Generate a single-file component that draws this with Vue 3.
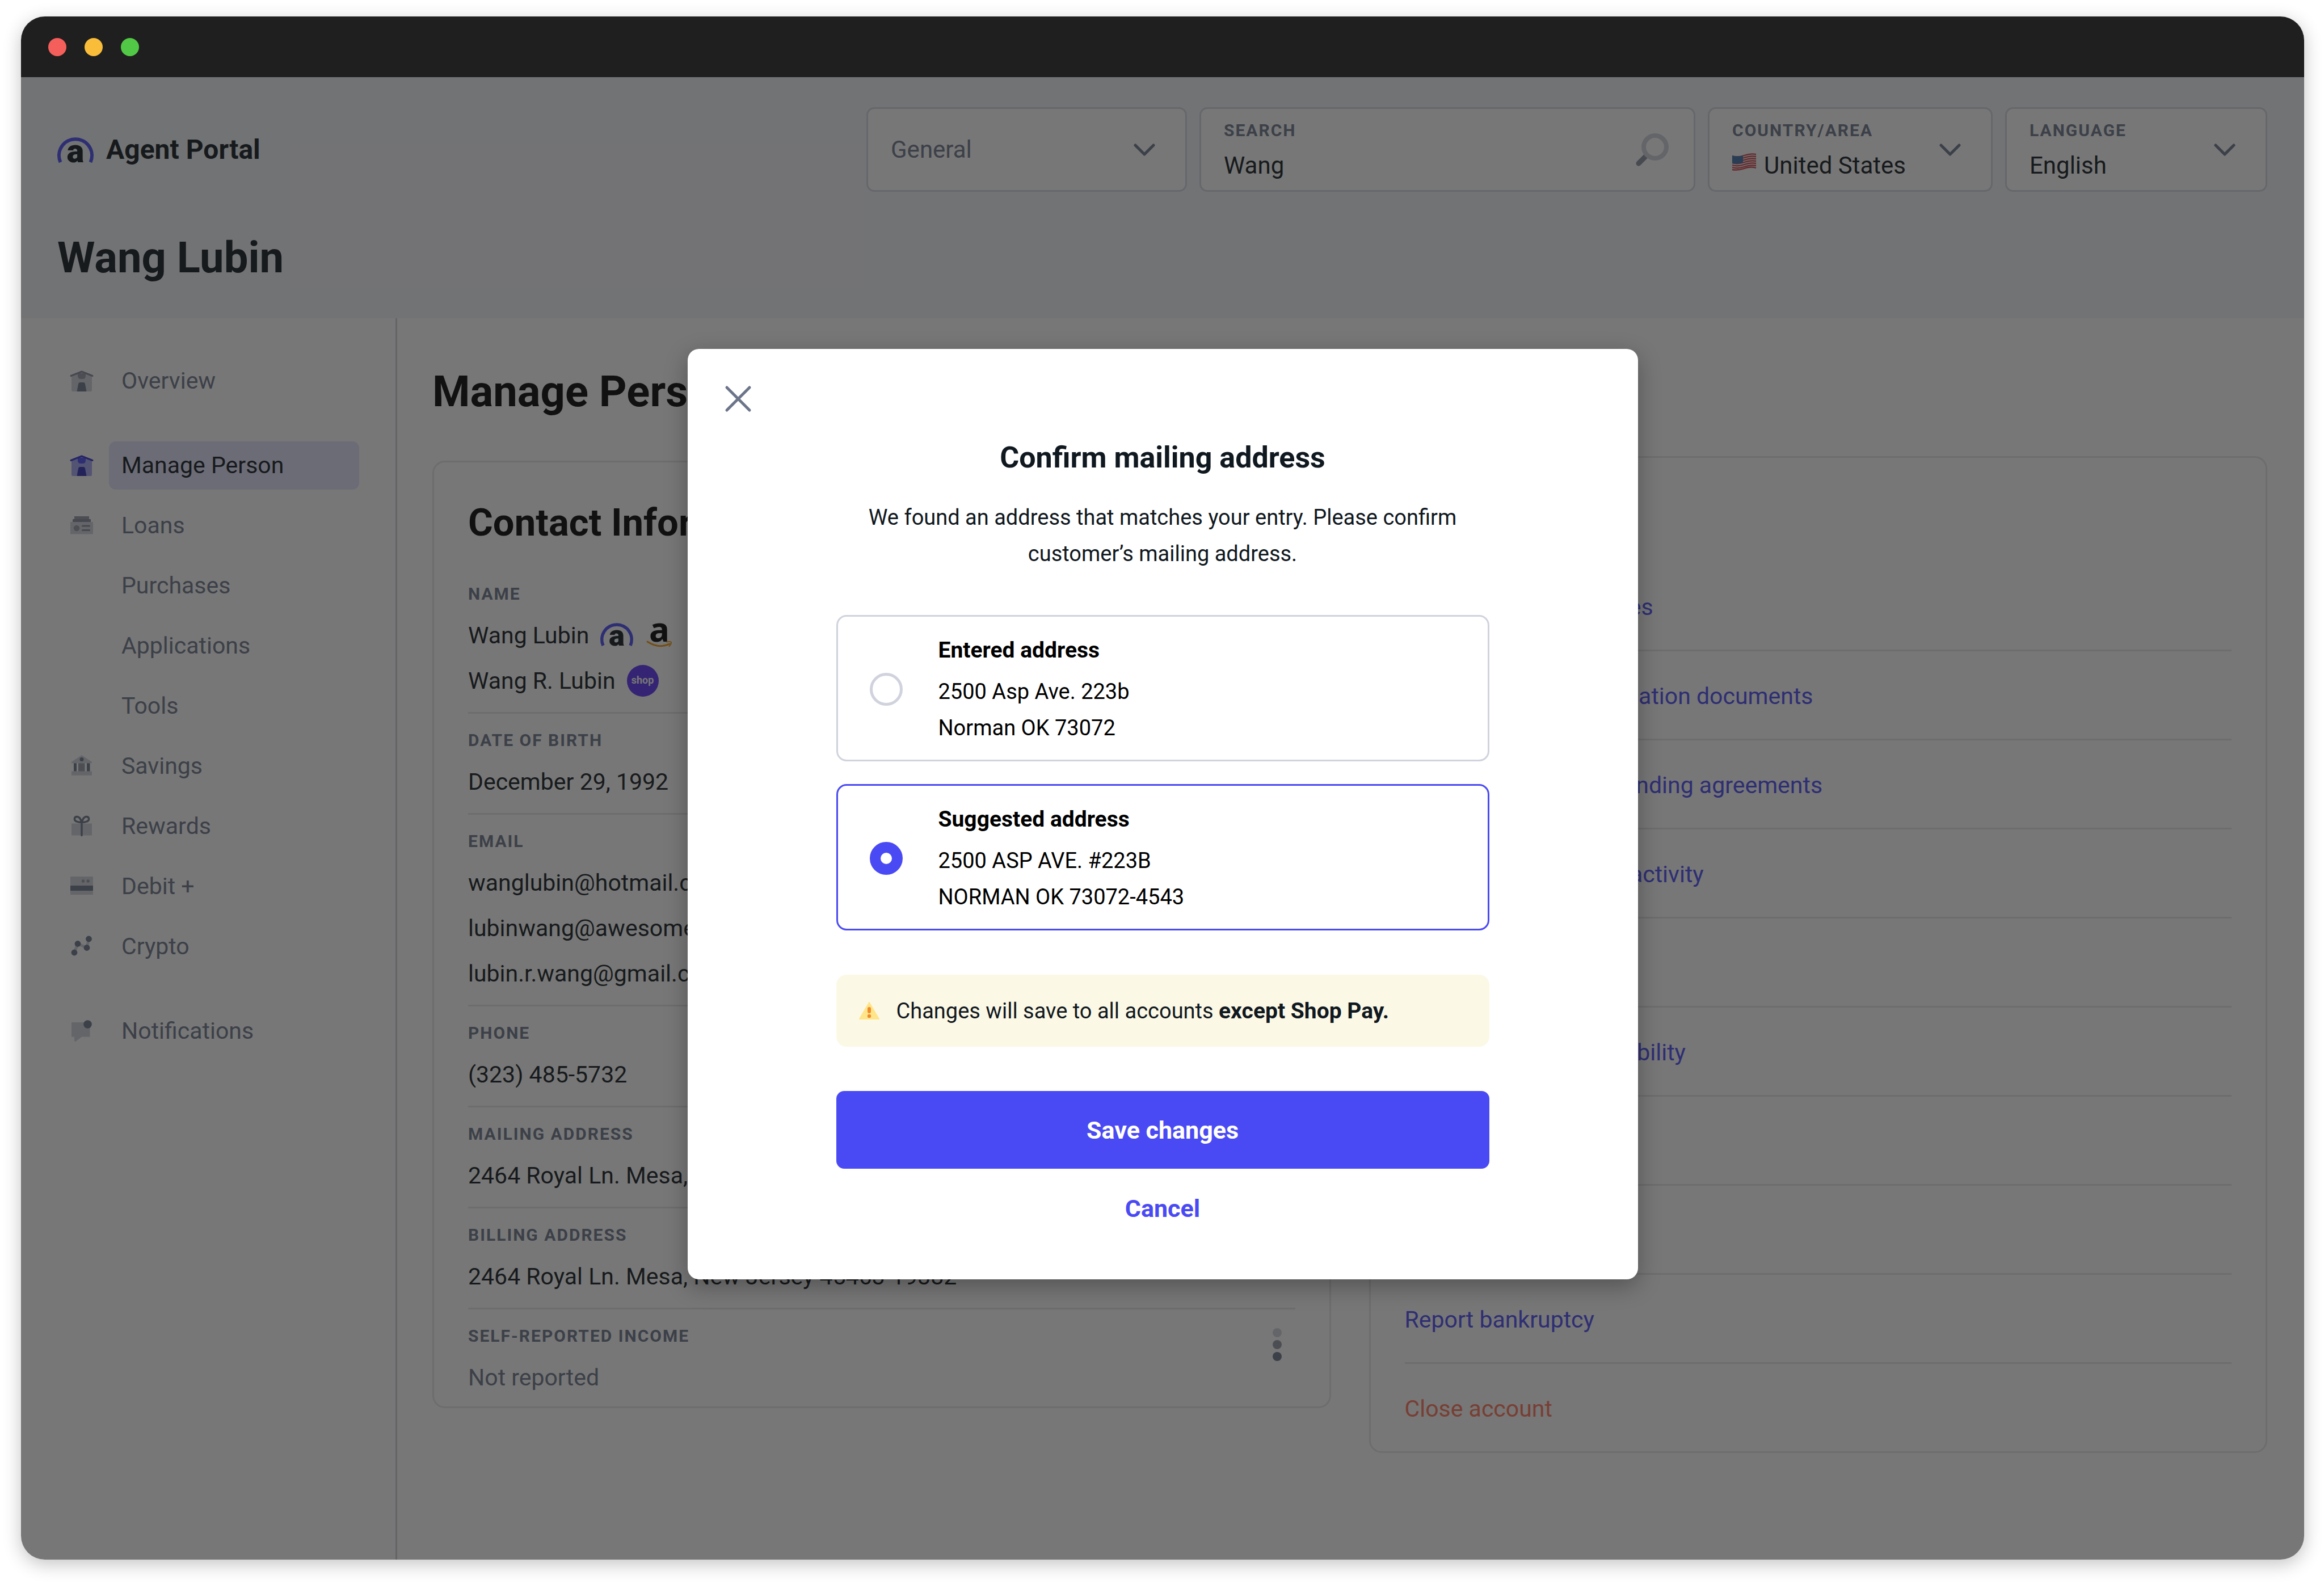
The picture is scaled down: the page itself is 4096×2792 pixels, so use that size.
<script setup>
import { ref } from 'vue'

const scope = ref('General')
const search = ref('Wang')
const country = ref('United States')
const language = ref('English')
const address = ref('suggested')

const dot = (x, y, r) => `M${x - r} ${y}a${r} ${r} 0 1 0 ${2 * r} 0a${r} ${r} 0 1 0 ${-2 * r} 0z`

const house = [
  { tone: 'light', d: 'M2 11L20 4L38 11V36Q38 38 36 38H4Q2 38 2 36z' },
  { tone: 'mid', d: 'M13 6H27V10Q27 16 22 16H18Q13 16 13 10z' },
  { tone: 'roof', line: 3, d: 'M1 10.5L20 3L39 10.5' },
  { tone: 'dark', d: 'M11.5 38L14 25Q14.500 22 17 22H23Q25.500 22 26 25L28.500 38z' },
]

const icons = {
  house,
  loans: [
    { tone: 'light', d: 'M0 13H40V34.500H0z' },
    { tone: 'mid', d: 'M7 3H33V8H7z' },
    { tone: 'roof', d: 'M5 8H35Q36 8 36 9V13H4V9Q4 8 5 8z' },
    { tone: 'mid', d: dot(11, 24, 5.3) },
    { tone: 'roof', line: 3.2, d: 'M21.500 20H33.500M21.500 27.500H33.500' },
  ],
  savings: [
    { tone: 'light', d: 'M20 0L38 12V14.300H2V12z' },
    { tone: 'light', d: 'M2 28.600H38V35.700H2z' },
    { tone: 'dark', d: 'M6 14.300H11V28.600H6zM29 14.300H34.500V28.600H29z' },
    { tone: 'mid', d: 'M14 14.300H25.500V28.600H14z' },
    { tone: 'dark', d: dot(20, 7.5, 3.5) },
  ],
  rewards: [
    { tone: 'light', d: 'M2 14.500H38V35.500H2z' },
    { tone: 'dark', line: 3.4, d: 'M20 35.500V12.500C18 6 16 2.500 12 2.500C6 2.500 6 9.500 11 11Q15 12.500 20 12.500Q25 12.500 29 11C34 9.500 34 2.500 28 2.500C24 2.500 22 6 20 12.500' },
  ],
  debit: [
    { tone: 'light', d: 'M0 2H40V34H0z' },
    { tone: 'dark', d: 'M0 18H40V27H0z' },
    { tone: 'mid', d: dot(22.5, 10, 2.7) + dot(31.2, 10, 2.7) },
  ],
  crypto: [
    { tone: 'light', line: 5, d: 'M7 30L13 14.500L29 21.500L32.500 6' },
    { tone: 'dark', d: dot(7, 30, 5.4) + dot(13, 14.5, 5.4) + dot(29, 21.5, 5.4) + dot(32.5, 6, 5.4) },
  ],
  bell: [
    { tone: 'light', d: 'M2 4H34.500V29.500H20L9 38L7 37V29.500H2z' },
    { tone: 'dark', d: dot(30.5, 7.5, 7.3) },
  ],
}

const navGroups = [
  [{ label: 'Overview', icon: 'house' }],
  [
    { label: 'Manage Person', icon: 'house', active: true },
    { label: 'Loans', icon: 'loans' },
    { label: 'Purchases' },
    { label: 'Applications' },
    { label: 'Tools' },
    { label: 'Savings', icon: 'savings' },
    { label: 'Rewards', icon: 'rewards' },
    { label: 'Debit +', icon: 'debit' },
    { label: 'Crypto', icon: 'crypto' },
  ],
  [{ label: 'Notifications', icon: 'bell' }],
]

const contact = [
  { label: 'Name', values: [{ text: 'Wang Lubin', marks: ['affirm', 'amazon'] }, { text: 'Wang R. Lubin', marks: ['shop'] }] },
  { label: 'Date of birth', values: [{ text: 'December 29, 1992' }] },
  { label: 'Email', values: [{ text: 'wanglubin@hotmail.com' }, { text: 'lubinwang@awesome.com' }, { text: 'lubin.r.wang@gmail.com' }] },
  { label: 'Phone', values: [{ text: '(323) 485-5732' }] },
  { label: 'Mailing address', values: [{ text: '2464 Royal Ln. Mesa, New Jersey 45463-19382' }] },
  { label: 'Billing address', values: [{ text: '2464 Royal Ln. Mesa, New Jersey 45463-19382' }] },
  { label: 'Self-reported income', values: [{ text: 'Not reported', muted: true }], menu: true },
]

const actions = [
  'Notification preferences',
  'Request identity verification documents',
  'Download customer lending agreements',
  'Dispute unauthorized activity',
  '',
  'Check application eligibility',
  '',
  '',
  'Report bankruptcy',
  'Close account',
]

const options = [
  { id: 'entered', title: 'Entered address', lines: ['2500 Asp Ave. 223b', 'Norman OK 73072'] },
  { id: 'suggested', title: 'Suggested address', lines: ['2500 ASP AVE. #223B', 'NORMAN OK 73072-4543'] },
]
</script>

<template>
  <div class="page">
    <div class="window">
      <div class="titlebar">
        <span class="light red"></span>
        <span class="light amber"></span>
        <span class="light green"></span>
      </div>

      <div class="app">
        <header class="header">
          <div class="header-row">
            <div class="brand">
              <svg class="brand-mark" viewBox="0 0 64 46" aria-hidden="true">
                <path d="M5.500 45A29 29 0 1 1 58.500 45" fill="none" stroke="#4a4af4" stroke-width="6" />
                <text x="32" y="45" class="mark-letter">a</text>
              </svg>
              <span>Agent Portal</span>
            </div>

            <div class="filters">
              <div class="field field-scope">
                <select v-model="scope" class="control muted" aria-label="Search scope">
                  <option>General</option>
                </select>
                <svg class="chevron" viewBox="0 0 38 22" aria-hidden="true"><path d="M3 3L19 19L35 3" /></svg>
              </div>

              <div class="field field-search">
                <div class="stack">
                  <label for="search" class="caption">SEARCH</label>
                  <input id="search" v-model="search" class="control" type="text" />
                </div>
                <svg class="lens" viewBox="0 0 58 58" aria-hidden="true">
                  <path d="M17 41L5 53" stroke="#8990a3" stroke-width="9" stroke-linecap="round" />
                  <circle cx="34" cy="24" r="20" fill="none" stroke="#d0d2dc" stroke-width="8" />
                </svg>
              </div>

              <div class="field field-country">
                <div class="stack">
                  <label for="country" class="caption">COUNTRY/AREA</label>
                  <div class="flagged">
                    <svg class="flag" viewBox="0 0 42 31" aria-hidden="true">
                      <path d="M0 4Q10 7 21 3T42 1V27Q32 25 21 28T0 30z" fill="#eceef0" />
                      <g fill="none" stroke="#d8404a" stroke-width="2.300">
                        <path d="M0 5Q10 8 21 4T42 2M0 9Q10 12 21 8T42 6M0 13Q10 16 21 12T42 10M0 17Q10 20 21 16T42 14M0 21Q10 24 21 20T42 18M0 25Q10 28 21 24T42 22M0 29Q10 31 21 27T42 26" />
                      </g>
                      <path d="M0 4Q9 7 19 4V17Q9 20 0 18z" fill="#3c6ea8" />
                    </svg>
                    <select id="country" v-model="country" class="control">
                      <option>United States</option>
                    </select>
                  </div>
                </div>
                <svg class="chevron" viewBox="0 0 38 22" aria-hidden="true"><path d="M3 3L19 19L35 3" /></svg>
              </div>

              <div class="field field-language">
                <div class="stack">
                  <label for="language" class="caption">LANGUAGE</label>
                  <select id="language" v-model="language" class="control">
                    <option>English</option>
                  </select>
                </div>
                <svg class="chevron" viewBox="0 0 38 22" aria-hidden="true"><path d="M3 3L19 19L35 3" /></svg>
              </div>
            </div>
          </div>
          <h1 class="person">Wang Lubin</h1>
        </header>

        <div class="body">
          <nav class="sidebar">
            <ul v-for="(group, g) in navGroups" :key="g" class="nav-group">
              <li v-for="item in group" :key="item.label" class="nav-item" :class="{ active: item.active }">
                <span class="nav-icon">
                  <svg v-if="item.icon" viewBox="0 0 40 40" aria-hidden="true">
                    <path
                      v-for="(s, i) in icons[item.icon]"
                      :key="i"
                      :d="s.d"
                      :class="[s.tone, s.line ? 'stroke' : 'fill']"
                      :stroke-width="s.line"
                    />
                  </svg>
                </span>
                <a href="#" class="nav-link">{{ item.label }}</a>
              </li>
            </ul>
          </nav>

          <main class="main">
            <h2 class="page-title">Manage Person</h2>
            <div class="cards">
              <section class="card contact">
                <h3 class="card-title">Contact Information</h3>
                <div v-for="row in contact" :key="row.label" class="row">
                  <div class="row-text">
                    <div class="caption">{{ row.label.toUpperCase() }}</div>
                    <div class="values">
                      <div v-for="v in row.values" :key="v.text" class="value" :class="{ muted: v.muted }">
                        <span>{{ v.text }}</span>
                        <template v-for="m in v.marks" :key="m">
                          <svg v-if="m === 'affirm'" class="mark-affirm" viewBox="0 0 64 46" aria-hidden="true">
                            <path d="M5.500 45A29 29 0 1 1 58.500 45" fill="none" stroke="#4a4af4" stroke-width="6" />
                            <text x="32" y="45" class="mark-letter">a</text>
                          </svg>
                          <svg v-else-if="m === 'amazon'" class="mark-amazon" viewBox="0 0 44 46" aria-hidden="true">
                            <text x="22" y="34" class="amazon-letter">a</text>
                            <path d="M1 34Q21 47 40 38" fill="none" stroke="#f59a0c" stroke-width="3" stroke-linecap="round" />
                            <path d="M35 34.500Q42 33 43 35Q43.500 38 39.500 42" fill="none" stroke="#f59a0c" stroke-width="2" stroke-linecap="round" />
                          </svg>
                          <span v-else class="mark-shop">shop</span>
                        </template>
                      </div>
                    </div>
                  </div>
                  <button v-if="row.menu" class="kebab" type="button" aria-label="More">
                    <i class="k1"></i><i class="k2"></i><i class="k3"></i>
                  </button>
                </div>
              </section>

              <section class="card actions">
                <ul>
                  <li v-for="(a, i) in actions" :key="i">
                    <a v-if="a" href="#" :class="{ danger: a === 'Close account' }">{{ a }}</a>
                  </li>
                </ul>
              </section>
            </div>
          </main>
        </div>

        <div class="overlay">
          <div class="modal" role="dialog" aria-modal="true" aria-labelledby="modal-title">
            <button class="close" type="button" aria-label="Close">
              <svg viewBox="0 0 46 46" aria-hidden="true"><path d="M3 3L43 43M43 3L3 43" /></svg>
            </button>
            <div class="modal-inner">
              <h2 id="modal-title" class="modal-title">Confirm mailing address</h2>
              <p class="modal-text">We found an address that matches your entry. Please confirm<br />customer’s mailing address.</p>

              <div class="options">
                <label v-for="o in options" :key="o.id" class="option" :class="{ selected: address === o.id }">
                  <input v-model="address" type="radio" name="address" :value="o.id" />
                  <span class="option-text">
                    <strong>{{ o.title }}</strong>
                    <span v-for="l in o.lines" :key="l">{{ l }}</span>
                  </span>
                </label>
              </div>

              <div class="notice">
                <svg class="warn" viewBox="0 0 36 31" aria-hidden="true">
                  <path d="M18 1L35 30H1z" fill="#ffe58a" stroke="#ffe58a" stroke-width="2" stroke-linejoin="round" />
                  <rect x="15" y="9" width="6" height="11" rx="3" fill="#ee8b2d" />
                  <circle cx="18" cy="25" r="3.200" fill="#ee8b2d" />
                </svg>
                <span>Changes will save to all accounts <strong>except Shop Pay.</strong></span>
              </div>

              <button class="save" type="button">Save changes</button>
              <button class="cancel" type="button">Cancel</button>
            </div>
          </div>
        </div>
      </div>
    </div>
  </div>
</template>

<style>
body {
  background: #fff;
}
</style>

<style scoped>
* {
  box-sizing: border-box;
}

h1, h2, h3, p, ul {
  margin: 0;
  padding: 0;
}

ul {
  list-style: none;
}

a {
  color: inherit;
  text-decoration: none;
}

button, input, select {
  margin: 0;
  padding: 0;
  border: 0;
  background: none;
  font: inherit;
  color: inherit;
  appearance: none;
}

svg {
  display: block;
  flex: none;
  overflow: visible;
}

.page {
  display: flex;
  min-height: 100vh;
  padding: 29px 35px 43px 37px;
  font-family: Roboto, "Liberation Sans", sans-serif;
  font-size: 41px;
  color: #101820;
}

.window {
  display: flex;
  flex: 1;
  flex-direction: column;
  overflow: hidden;
  border-radius: 42px;
  background: #fff;
  box-shadow: 0 8px 32px rgba(0, 0, 0, 0.24);
}

.titlebar {
  display: flex;
  align-items: center;
  gap: 32px;
  height: 107px;
  padding: 0 48px;
  background: #1f1f1f;
}

.light {
  width: 32px;
  height: 32px;
  border-radius: 50%;
}

.red { background: #f55f5b; }
.amber { background: #fabd3a; }
.green { background: #52c946; }

.app {
  position: relative;
  display: flex;
  flex: 1;
  flex-direction: column;
}

.header {
  padding: 53px 65px 59px 64px;
  background: #f3f5fa;
}

.header-row {
  display: flex;
  align-items: center;
  justify-content: space-between;
}

.brand {
  display: flex;
  align-items: center;
  gap: 22px;
  font-size: 48px;
  font-weight: 700;
}

.brand-mark {
  width: 64px;
  height: 46px;
}

.mark-letter {
  font-size: 58px;
  font-weight: 900;
  text-anchor: middle;
  fill: #101820;
}

.filters {
  display: flex;
  gap: 22px;
}

.field {
  display: flex;
  align-items: center;
  justify-content: space-between;
  height: 149px;
  padding: 0 53px 0 40px;
  border: 3px solid #d5d8e2;
  border-radius: 14px;
  background: #fff;
}

.field-scope { width: 565px; }
.field-search { width: 874px; padding-right: 44px; }
.field-country { width: 502px; }
.field-language { width: 462px; }

.stack {
  display: flex;
  flex-direction: column;
  gap: 12px;
}

.caption {
  font-size: 30px;
  font-weight: 700;
  line-height: 44px;
  letter-spacing: 2px;
  color: #6c7589;
}

.control {
  height: 56px;
  font-size: 42px;
  line-height: 56px;
}

.muted {
  color: #6c7589;
}

.chevron {
  width: 38px;
  height: 22px;
}

.chevron path {
  fill: none;
  stroke: #6c7589;
  stroke-width: 5px;
  stroke-linecap: round;
  stroke-linejoin: round;
}

.lens {
  width: 58px;
  height: 58px;
}

.flagged {
  display: flex;
  gap: 14px;
}

.flag {
  width: 42px;
  height: 31px;
  margin-top: 6px;
}

.person, .page-title {
  font-size: 76px;
  font-weight: 700;
  line-height: 96px;
}

.person {
  margin-top: 68px;
}

.page-title, .card-title {
  color: #000;
}

.body {
  display: flex;
  flex: 1;
}

.sidebar {
  display: flex;
  flex: none;
  flex-direction: column;
  gap: 64px;
  width: 663px;
  padding: 68px 64px 64px 87px;
  border-right: 3px solid #cfd0d9;
}

.nav-group {
  display: flex;
  flex-direction: column;
  gap: 21px;
}

.nav-item {
  display: flex;
  align-items: center;
  gap: 28px;
  color: #6c7589;
}

.nav-icon {
  flex: none;
  width: 40px;
  height: 40px;
}

.nav-link {
  flex: 1;
  height: 85px;
  padding: 0 22px;
  border-radius: 12px;
  line-height: 85px;
}

.active .nav-link {
  background: #e4e4ff;
  color: #101820;
}

.fill.light { fill: #d0d3dd; }
.fill.mid { fill: #9398a8; }
.fill.roof { fill: #858b9b; }
.fill.dark { fill: #6c7589; }
.fill, .stroke { width: auto; height: auto; border-radius: 0; }
.stroke { fill: none; stroke-linecap: round; stroke-linejoin: round; }
.stroke.light { stroke: #d0d3dd; }
.stroke.roof { stroke: #858b9b; }
.stroke.dark { stroke: #6c7589; }
.active .fill.light { fill: #a6a6f6; }
.active .fill.mid { fill: #4a4af4; }
.active .fill.dark { fill: #2d2db4; }
.active .stroke.roof { stroke: #3434d4; }

.main {
  flex: 1;
  min-width: 0;
  padding: 81px 65px 64px 62px;
}

.cards {
  display: flex;
  align-items: flex-start;
  gap: 67px;
  padding-top: 66px;
}

.card {
  flex: 1 1 0;
  min-width: 0;
  border: 3px solid #e6e6e6;
  border-radius: 22px;
}

.contact {
  margin-top: 8px;
  padding: 66px 60px 11px;
}

.card-title {
  margin-bottom: 64px;
  font-size: 67px;
  font-weight: 700;
  line-height: 80px;
}

.row {
  display: flex;
  align-items: flex-start;
  justify-content: space-between;
  padding: 25px 0 15px;
  border-top: 3px solid #e6e6e6;
}

.card-title + .row {
  padding-top: 0;
  border-top: 0;
}

.row:last-child {
  padding-bottom: 0;
}

.values {
  margin-top: 11px;
}

.value {
  display: flex;
  align-items: center;
  height: 80px;
  line-height: 80px;
}

.mark-affirm {
  width: 58px;
  height: 42px;
  margin: 0 24px 4px 20px;
}

.mark-amazon {
  width: 44px;
  height: 46px;
}

.amazon-letter {
  font-family: "Noto Sans", sans-serif;
  font-size: 60px;
  font-weight: 700;
  text-anchor: middle;
  fill: #000;
}

.mark-shop {
  width: 56px;
  height: 56px;
  margin-left: 20px;
  border-radius: 50%;
  background: #5a31f4;
  color: #fff;
  font-size: 18px;
  font-weight: 700;
  line-height: 54px;
  text-align: center;
}

.kebab {
  display: flex;
  flex-direction: column;
  gap: 5px;
  margin: 8px 24px 0 0;
}

.kebab i {
  width: 16px;
  height: 16px;
  border-radius: 50%;
}

.k1 { background: #d0d3dd; }
.k2 { background: #9398a8; }
.k3 { background: #6c7589; }

.actions {
  padding: 184px 60px 0;
  color: #4a4af4;
}

.actions li {
  height: 157px;
  border-bottom: 3px solid #e6e6e6;
  line-height: 158px;
}

.actions li:last-child {
  height: 154px;
  border-bottom: 0;
}

.actions .danger {
  color: #ff7358;
}

.overlay {
  position: absolute;
  inset: 0;
  display: flex;
  align-items: flex-start;
  justify-content: center;
  padding-top: 479px;
  background: rgba(29, 29, 29, 0.6);
}

.modal {
  width: 1675px;
  padding: 65px 66px 93px;
  border-radius: 20px;
  background: #fff;
  box-shadow: 0 12px 40px rgba(0, 0, 0, 0.3);
  font-size: 38px;
  line-height: 64px;
}

.modal strong {
  font-size: 39px;
}

.close {
  display: block;
}

.close svg {
  width: 46px;
  height: 46px;
}

.close path {
  stroke: #6c7589;
  stroke-width: 5px;
  stroke-linecap: round;
}

.modal-inner {
  display: flex;
  flex-direction: column;
  width: 1151px;
  margin: 45px auto 0;
}

.modal-title {
  font-size: 52px;
  font-weight: 700;
  line-height: 72px;
  text-align: center;
}

.modal-text {
  margin-top: 37px;
  text-align: center;
}

.options {
  display: flex;
  flex-direction: column;
  gap: 40px;
  margin: 76px 0 78px;
}

.option {
  display: flex;
  align-items: center;
  gap: 63px;
  padding: 27px 56px 24px;
  border: 3px solid #d0d3dd;
  border-radius: 18px;
  color: #000;
}

.option.selected {
  border-color: #4a4af4;
}

.option input {
  width: 58px;
  height: 58px;
  border: 5px solid #d0d3dd;
  border-radius: 50%;
}

.option input:checked {
  border: 19px solid #4a4af4;
}

.option-text {
  display: flex;
  flex-direction: column;
}

.option-text strong {
  margin-bottom: 9px;
}

.notice {
  display: flex;
  align-items: center;
  gap: 30px;
  height: 127px;
  padding: 0 40px;
  border-radius: 18px;
  background: #fcf8e6;
}

.warn {
  width: 36px;
  height: 31px;
}

.save {
  height: 137px;
  margin-top: 78px;
  border-radius: 14px;
  background: #4a4af4;
  color: #fff;
  font-size: 43px;
  font-weight: 700;
}

.cancel {
  align-self: center;
  height: 64px;
  margin-top: 38px;
  color: #4a4af4;
  font-size: 43px;
  font-weight: 700;
}
</style>
